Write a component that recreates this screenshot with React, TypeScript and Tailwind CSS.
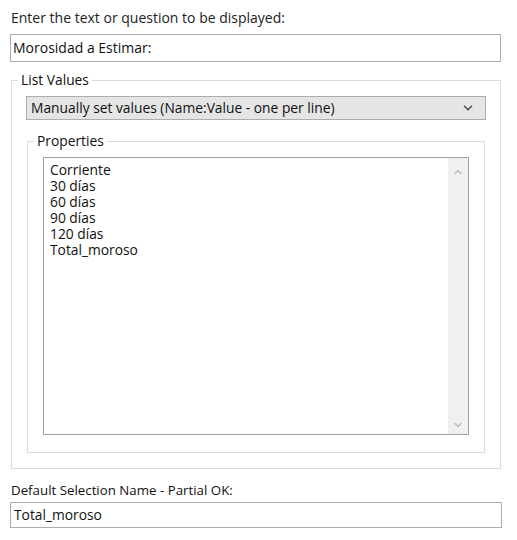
import { ChevronDown, ChevronUp } from "lucide-react";

const items = ["Corriente", "30 días", "60 días", "90 días", "120 días", "Total_moroso"];

export default function App() {
  return (
    <div className="w-[517px] h-[540px] bg-white text-[#111] text-[13.8px] leading-[16px] font-['Open_Sans',sans-serif] px-[10px] pt-[10px]">
      <div className="pl-[1px] text-[14px] text-[#222]">Enter the text or question to be displayed:</div>

      <div className="mt-[8px] h-[28px] w-[491px] border border-[#abadb3] flex items-center px-[2px] text-[14px]">
        Morosidad a Estimar:
      </div>

      {/* List Values */}
      <fieldset className="mt-[10px] ml-[1px] w-[490px] border border-[#dcdcdc] pb-[15px]">
        <legend className="ml-[6px] px-[3px]">List Values</legend>
        <div className="px-[14px] pt-[8px]">
          <div className="h-[24px] border border-[#adadad] bg-[#e5e5e5] flex items-center justify-between pl-[4px] pr-[10px]">
            <span>Manually set values (Name:Value - one per line)</span>
            <ChevronDown size={14} strokeWidth={3} className="text-[#555]" />
          </div>

          {/* Properties */}
          <fieldset className="mt-[13px] mx-[1px] border border-[#dcdcdc] pb-[17px]">
            <legend className="ml-[6px] px-[3px]">Properties</legend>
            <div className="px-[15px] pt-[8px]">
              <div className="h-[278px] border border-[#a0a0a0] flex">
                <div className="flex-1 pl-[6px] pt-[4px]">
                  {items.map((item) => (
                    <div key={item}>{item}</div>
                  ))}
                </div>
                <div className="w-[20px] bg-[#f0f0f0] flex flex-col justify-between items-center pt-[8px] pb-[3px]">
                  <ChevronUp size={12} strokeWidth={3} className="text-[#bcbcbc]" />
                  <ChevronDown size={12} strokeWidth={3} className="text-[#bcbcbc]" />
                </div>
              </div>
            </div>
          </fieldset>
        </div>
      </fieldset>

      <div className="mt-[13px] pl-[1px] text-[13.3px]">Default Selection Name - Partial OK:</div>
      <div className="mt-[4px] h-[26px] w-[492px] border border-[#abadb3] flex items-center px-[3px]">
        Total_moroso
      </div>
    </div>
  );
}
